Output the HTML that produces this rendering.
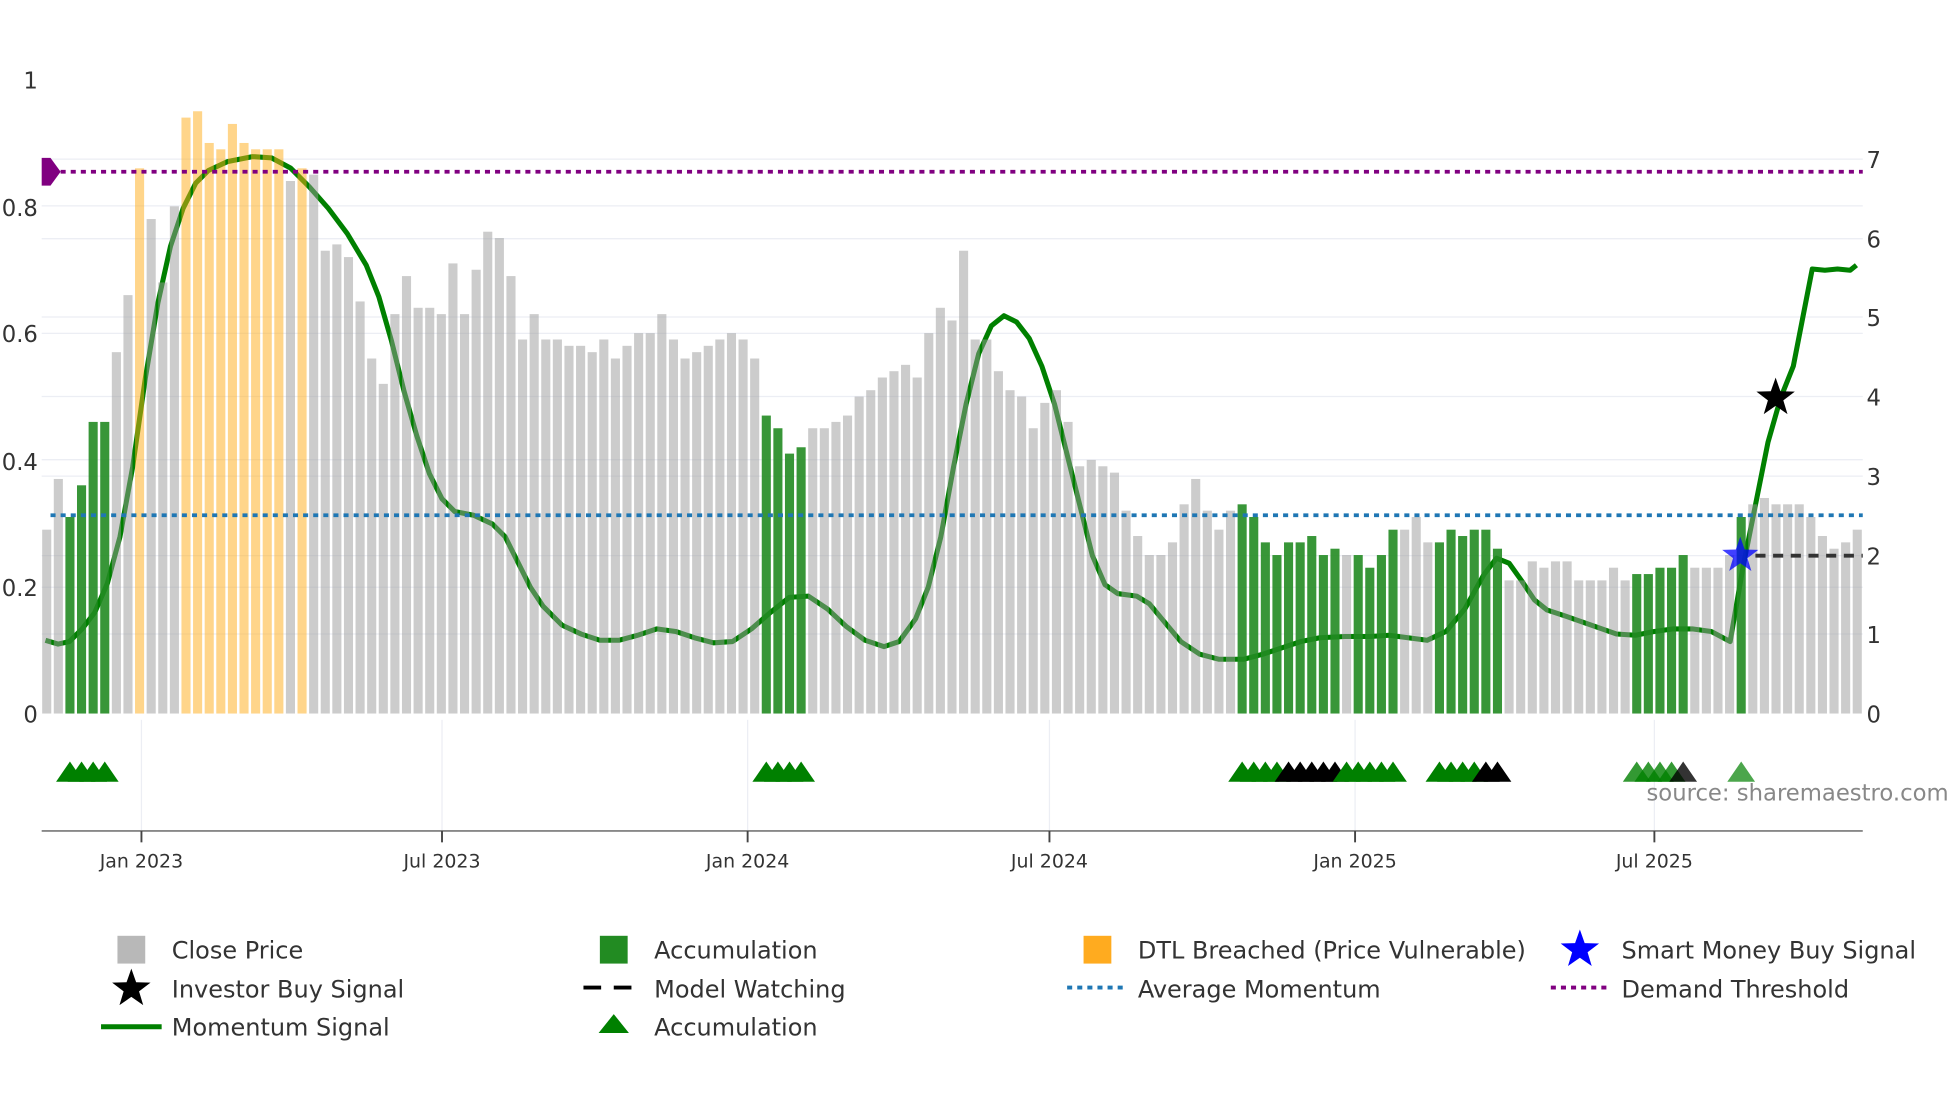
<!DOCTYPE html>
<html><head><meta charset="utf-8"><style>
html,body{margin:0;padding:0;background:#fff;}
svg{display:block;}
text{font-family:"DejaVu Sans","Liberation Sans",sans-serif;fill:#333;}
</style></head><body>
<svg id="s" width="1960" height="1102" viewBox="0 0 1552 872.6" xmlns="http://www.w3.org/2000/svg">
<g id="grid" stroke="#eceef4" stroke-width="1"></g>
<g stroke="#eceef4" stroke-width="1">
<line x1="112" y1="570" x2="112" y2="658"/><line x1="350" y1="570" x2="350" y2="658"/><line x1="592" y1="570" x2="592" y2="658"/><line x1="831" y1="570" x2="831" y2="658"/><line x1="1073" y1="570" x2="1073" y2="658"/><line x1="1310" y1="570" x2="1310" y2="658"/>
</g>
<polyline id="mom" fill="none" stroke="#008000" stroke-width="4" stroke-linejoin="round"></polyline>
<g id="bars"></g>
<line x1="40" y1="408" x2="1475" y2="408" stroke="#1f77b4" stroke-width="3" stroke-dasharray="4,4"/>
<line x1="40" y1="136" x2="1475" y2="136" stroke="#800080" stroke-width="3" stroke-dasharray="4,4"/>
<polygon points="33,125 40,125 48,136 40,147 33,147" fill="#800080"/>
<line x1="1390" y1="440" x2="1475" y2="440" stroke="#333" stroke-width="3" stroke-dasharray="8,6"/>
<polygon id="bstar" fill="#0000ff" opacity="0.75"></polygon>
<polygon id="kstar" fill="#000"></polygon>
<g id="tri"></g>
<g font-size="18">
<text x="30" y="70" text-anchor="end">1</text>
<text x="30" y="171" text-anchor="end">0.8</text>
<text x="30" y="271" text-anchor="end">0.6</text>
<text x="30" y="372" text-anchor="end">0.4</text>
<text x="30" y="472" text-anchor="end">0.2</text>
<text x="30" y="572" text-anchor="end">0</text>
<text x="1478" y="572">0</text><text x="1478" y="509">1</text><text x="1478" y="447">2</text><text x="1478" y="384">3</text><text x="1478" y="321">4</text><text x="1478" y="258">5</text><text x="1478" y="196">6</text><text x="1478" y="133">7</text>
</g>
<line x1="33" y1="658" x2="1475" y2="658" stroke="#888" stroke-width="1.5"/>
<g stroke="#444" stroke-width="1.5">
<line x1="112" y1="658" x2="112" y2="667"/><line x1="350" y1="658" x2="350" y2="667"/><line x1="592" y1="658" x2="592" y2="667"/><line x1="831" y1="658" x2="831" y2="667"/><line x1="1073" y1="658" x2="1073" y2="667"/><line x1="1310" y1="658" x2="1310" y2="667"/>
</g>
<g font-size="15" text-anchor="middle">
<text x="112" y="687">Jan 2023</text><text x="350" y="687">Jul 2023</text><text x="592" y="687">Jan 2024</text><text x="831" y="687">Jul 2024</text><text x="1073" y="687">Jan 2025</text><text x="1310" y="687">Jul 2025</text>
</g>
<text x="1543" y="634" font-size="18" text-anchor="end" style="fill:#888">source: sharemaestro.com</text>
<g font-size="19">
<rect x="93" y="741" width="22" height="22" fill="#b8b8b8"/><text x="136" y="759">Close Price</text>
<text x="136" y="790">Investor Buy Signal</text>
<line x1="80" y1="813" x2="128" y2="813" stroke="#008000" stroke-width="4"/><text x="136" y="820">Momentum Signal</text>
<rect x="475" y="741" width="22" height="22" fill="#228b22"/><text x="518" y="759">Accumulation</text>
<line x1="462" y1="782" x2="508" y2="782" stroke="#000" stroke-width="3" stroke-dasharray="14,10"/><text x="518" y="790">Model Watching</text>
<polygon points="486,803 474,818 498,818" fill="#008000"/><text x="518" y="820">Accumulation</text>
<rect x="858" y="741" width="22" height="22" fill="#ffab1f"/><text x="901" y="759">DTL Breached (Price Vulnerable)</text>
<line x1="845" y1="782" x2="890" y2="782" stroke="#1f77b4" stroke-width="3" stroke-dasharray="4,4"/><text x="901" y="790">Average Momentum</text>
<text x="1284" y="759">Smart Money Buy Signal</text>
<line x1="1228" y1="782" x2="1273" y2="782" stroke="#800080" stroke-width="3" stroke-dasharray="4,4"/><text x="1284" y="790">Demand Threshold</text>
</g>
<polygon id="ls1" fill="#000"></polygon>
<polygon id="ls2" fill="#0000ff"></polygon>
</svg>
<script>
var NS="http://www.w3.org/2000/svg";
function el(p,t,a){var e=document.createElementNS(NS,t);for(var k in a)e.setAttribute(k,a[k]);p.appendChild(e);return e;}
var g=document.getElementById('grid');
[465,364,264,163,502,440,377,314,251,189,126].forEach(function(y){el(g,'line',{x1:33,x2:1475,y1:y,y2:y});});
var v=[.29,.37,.31,.36,.46,.46,.57,.66,.86,.78,.68,.80,.94,.95,.90,.89,.93,.90,.89,.89,.89,.84,.86,.85,.73,.74,.72,.65,.56,.52,.63,.69,.64,.64,.63,.71,.63,.70,.76,.75,.69,.59,.63,.59,.59,.58,.58,.57,.59,.56,.58,.60,.60,.63,.59,.56,.57,.58,.59,.60,.59,.56,.47,.45,.41,.42,.45,.45,.46,.47,.50,.51,.53,.54,.55,.53,.60,.64,.62,.73,.59,.59,.54,.51,.50,.45,.49,.51,.46,.39,.40,.39,.38,.32,.28,.25,.25,.27,.33,.37,.32,.29,.32,.33,.31,.27,.25,.27,.27,.28,.25,.26,.25,.25,.23,.25,.29,.29,.31,.27,.27,.29,.28,.29,.29,.26,.21,.21,.24,.23,.24,.24,.21,.21,.21,.23,.21,.22,.22,.23,.23,.25,.23,.23,.23,.25,.31,.33,.34,.33,.33,.33,.31,.28,.26,.27,.29];
var G=[2,3,4,5,62,63,64,65,103,104,105,106,107,108,109,110,111,113,114,115,116,120,121,122,123,124,125,137,138,139,140,141,146];
var O=[8,12,13,14,15,16,17,18,19,20,22];
var b=document.getElementById('bars');
v.forEach(function(h,i){var x=37+9.19*i,hh=h*502;var f='#999',op=.5;
if(G.indexOf(i)>=0){f='#228b22';op=.9;}else if(O.indexOf(i)>=0){f='#ffab15';op=.5;}
el(b,'rect',{x:x-3.6,y:565-hh,width:7.2,height:hh,fill:f,opacity:op});});
var m=[[36,507],[46,510],[55,508],[65,498],[75,485],[85,462],[95,425],[105,370],[115,300],[125,240],[135,195],[145,165],[155,145],[165,135],[180,128],[200,124],[215,125],[230,133],[245,148],[260,165],[275,185],[290,210],[300,235],[310,270],[320,310],[330,345],[340,375],[350,395],[360,405],[375,408],[390,415],[400,425],[410,445],[420,465],[430,480],[445,495],[460,502],[475,507],[490,507],[505,503],[520,498],[535,500],[550,505],[565,509],[580,508],[595,498],[610,485],[625,473],[640,472],[655,482],[670,496],[685,507],[700,512],[712,508],[725,490],[735,465],[745,425],[755,370],[765,320],[775,280],[785,258],[795,250],[805,255],[815,268],[825,290],[835,320],[845,360],[855,400],[865,440],[875,463],[885,470],[900,472],[910,478],[920,490],[935,508],[950,518],[965,522],[985,522],[1000,518],[1015,513],[1030,508],[1045,505],[1065,504],[1085,504],[1100,503],[1115,505],[1130,507],[1145,500],[1160,482],[1175,455],[1185,442],[1195,446],[1205,460],[1215,475],[1225,483],[1240,488],[1260,495],[1280,502],[1295,503],[1310,500],[1325,498],[1340,498],[1355,500],[1370,508],[1380,450],[1390,400],[1400,350],[1410,315],[1420,290],[1435,213],[1445,214],[1455,213],[1465,214],[1470,210]];
document.getElementById('mom').setAttribute('points',m.map(function(p){return p.join(',')}).join(' '));
function star(cx,cy,R){var r=R*0.4,p=[];for(var k=0;k<10;k++){var a=-Math.PI/2+k*Math.PI/5,rr=k%2?r:R;p.push((cx+rr*Math.cos(a)).toFixed(1)+','+(cy+rr*Math.sin(a)).toFixed(1));}return p.join(' ');}
document.getElementById('kstar').setAttribute('points',star(1406,315,16));
document.getElementById('bstar').setAttribute('points',star(1378,440,15));
document.getElementById('ls1').setAttribute('points',star(104,783,16));
document.getElementById('ls2').setAttribute('points',star(1251,752,16));
var t=document.getElementById('tri');
var T=[[2,'#008000',1],[3,'#008000',1],[4,'#008000',1],[5,'#008000',1],[62,'#008000',1],[63,'#008000',1],[64,'#008000',1],[65,'#008000',1]];
for(var i=103;i<=116;i++)T.push([i,(i>=107&&i<=111)?'#000':'#008000',1]);
for(var i=120;i<=125;i++)T.push([i,i>=124?'#000':'#008000',1]);
for(var i=137;i<=141;i++)T.push([i,i==141?'#000':'#008000',.8]);
T.push([146,'#008000',.7]);
T.forEach(function(a){var x=37+9.19*a[0];el(t,'polygon',{points:(x-11)+',619 '+x+',603 '+(x+11)+',619',fill:a[1],opacity:a[2]});});
</script>
</body></html>
